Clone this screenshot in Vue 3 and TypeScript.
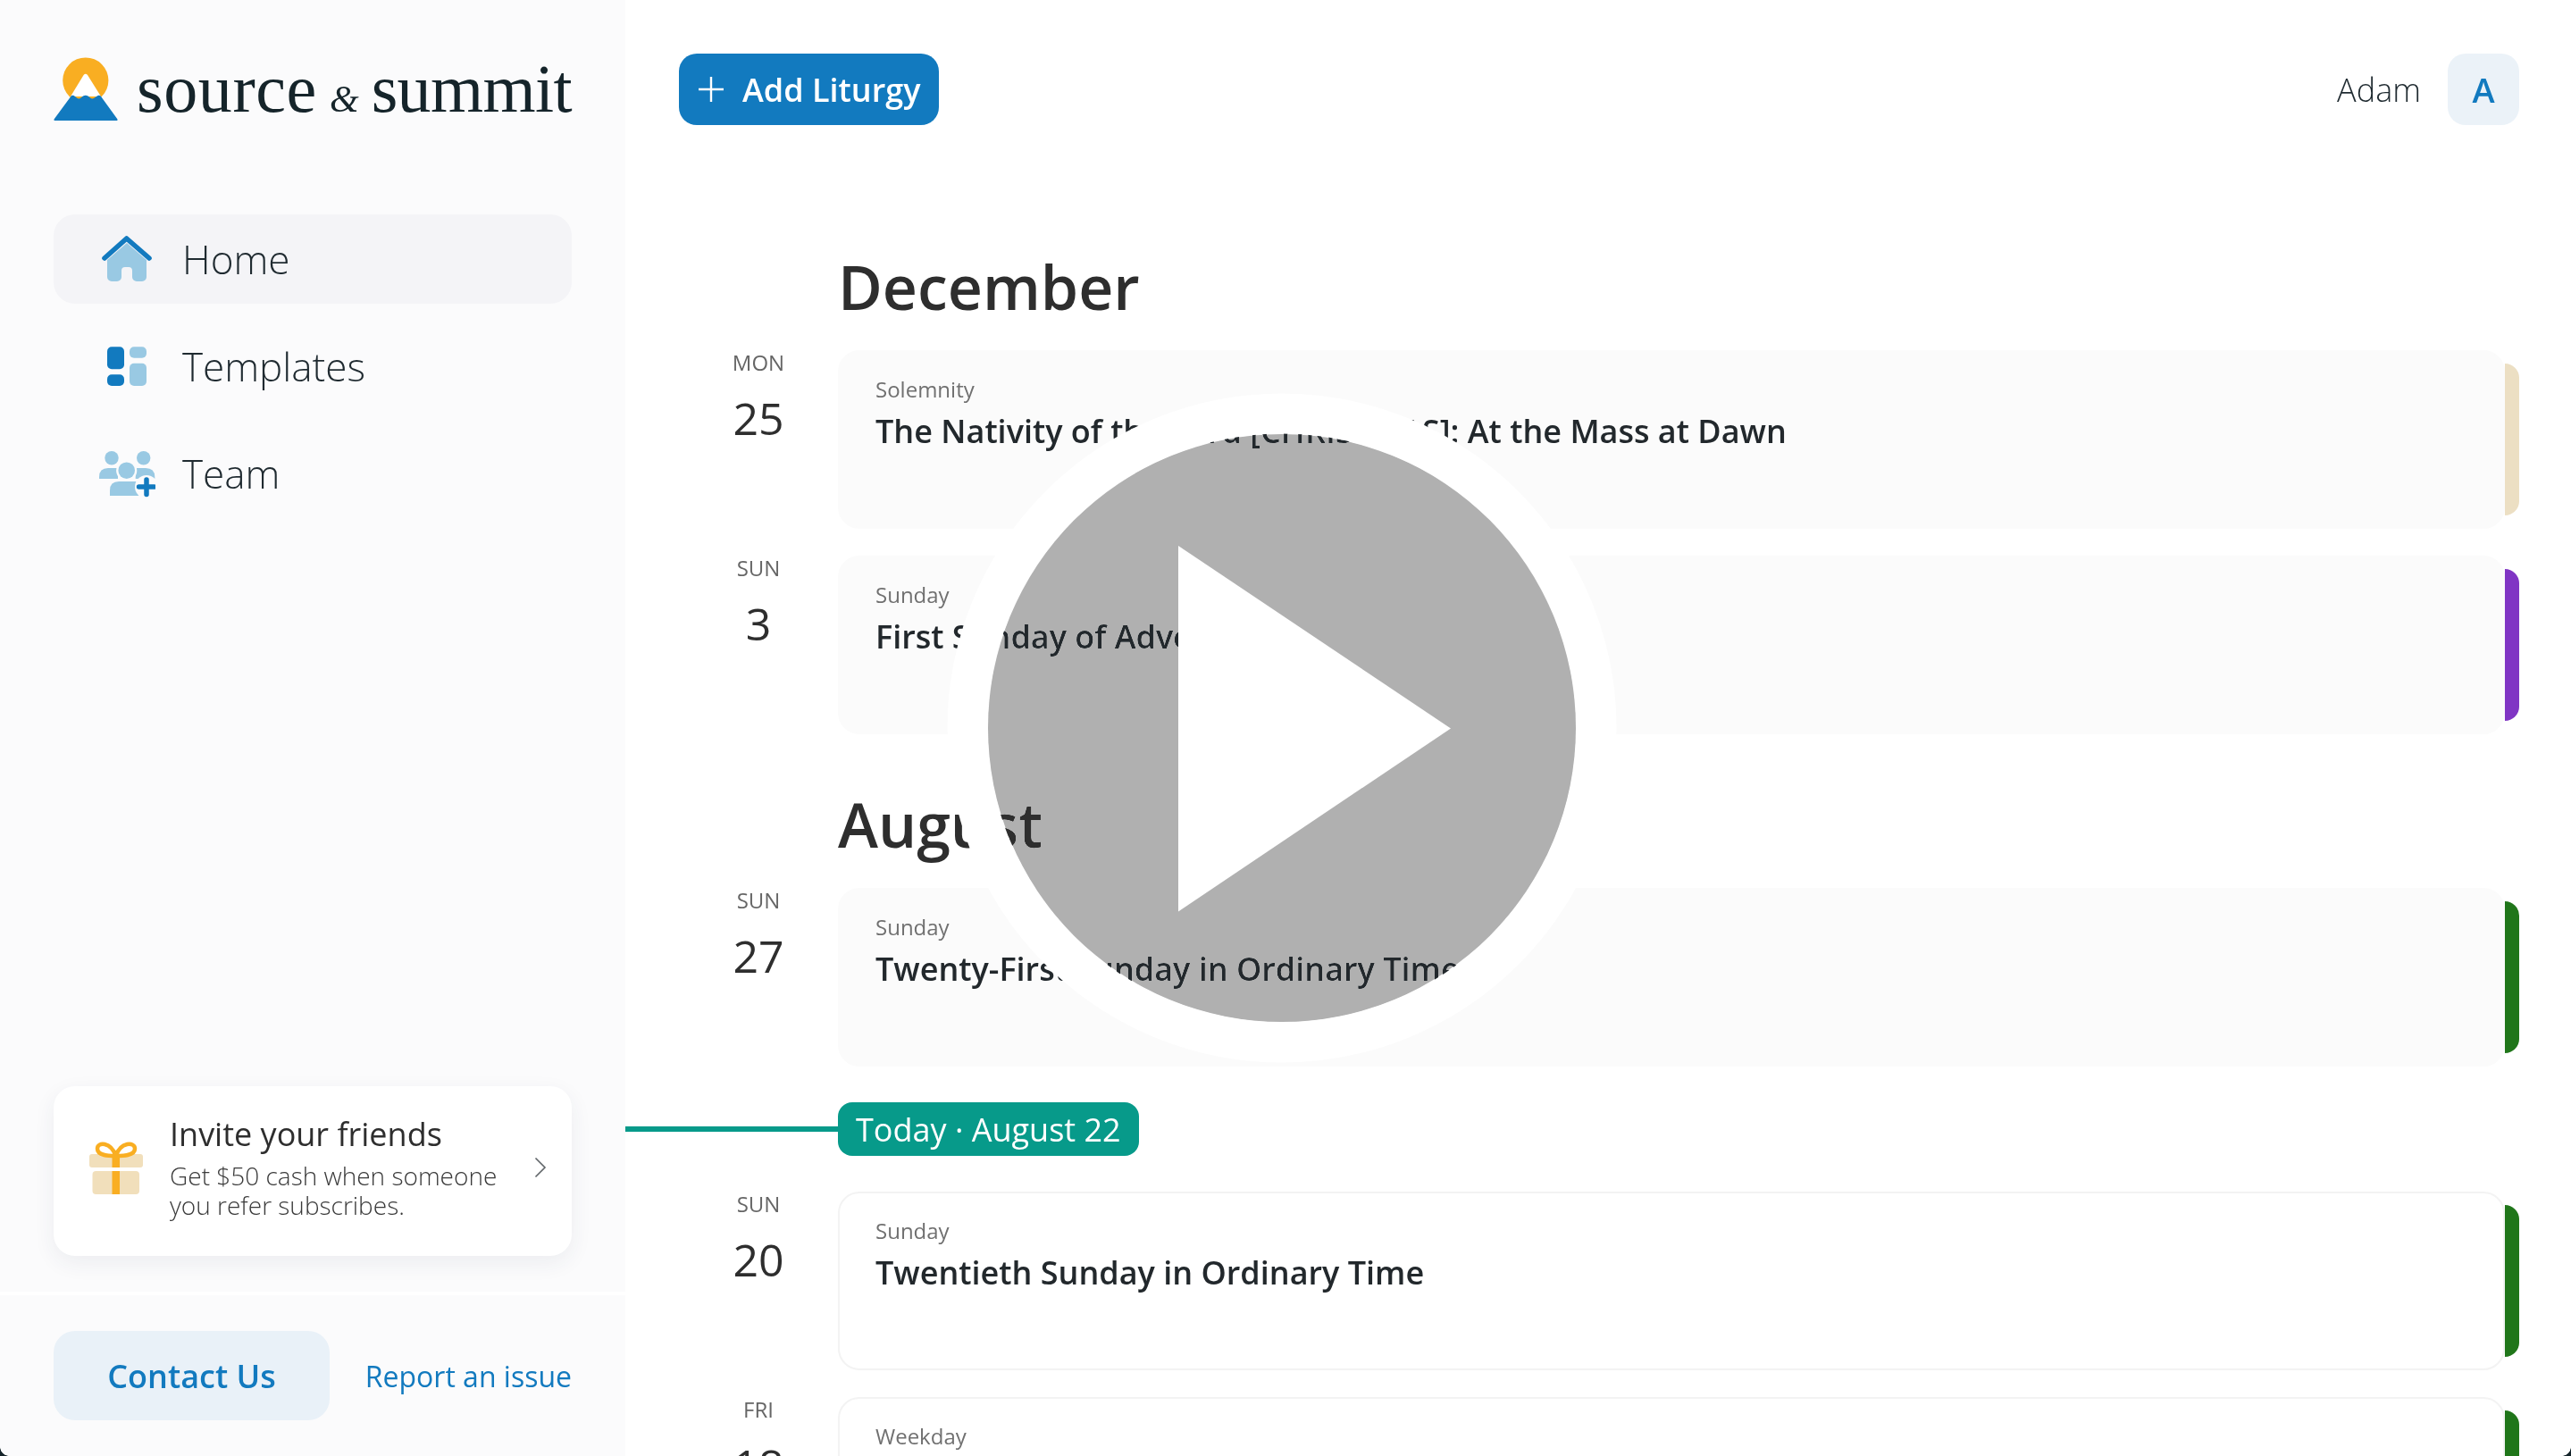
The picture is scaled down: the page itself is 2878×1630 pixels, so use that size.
<script setup lang="ts">
interface Liturgy {
  dow: string;
  day: string;
  kind: string;
  title: string;
  bar: string;
  outlined?: boolean;
}

const december: Liturgy[] = [
  { dow: 'MON', day: '25', kind: 'Solemnity', title: 'The Nativity of the Lord [CHRISTMAS]: At the Mass at Dawn', bar: '#ecdfc3' },
  { dow: 'SUN', day: '3', kind: 'Sunday', title: 'First Sunday of Advent', bar: '#8035c4' },
];
const augustBefore: Liturgy[] = [
  { dow: 'SUN', day: '27', kind: 'Sunday', title: 'Twenty-First Sunday in Ordinary Time', bar: '#20761a' },
];
const augustAfter: Liturgy[] = [
  { dow: 'SUN', day: '20', kind: 'Sunday', title: 'Twentieth Sunday in Ordinary Time', bar: '#20761a', outlined: true },
  { dow: 'FRI', day: '18', kind: 'Weekday', title: '', bar: '#20761a', outlined: true },
];
</script>

<template>
  <div class="app">
    <aside class="sidebar">
      <div class="logo">
        <svg class="logo-mark" width="72" height="72" viewBox="0 0 72 72">
          <circle cx="35.8" cy="26" r="25.6" fill="#f9ae22" />
          <path d="M33.6 20 Q35.8 17.4 38 20 L53 44 H19 Z" fill="#fff" />
          <path d="M20 43 Q22 42 24 44 L26.5 46 Q28.5 47 30.5 45.5 L33 43.5 Q35.8 41.8 38.5 43.5 L41 45.5 Q43 47 45 46 L48 44 Q50.5 42 52.5 43.2 L71.5 69.5 Q72 71 70.5 71 H1.5 Q0 71 .5 69.5 Z" fill="#127abf" />
        </svg>
        <div class="wordmark">
          <span class="word-a">source</span>
          <span class="amp">&amp;</span>
          <span class="word-b">summit</span>
        </div>
      </div>

      <nav class="nav">
        <div class="nav-item active">
          <svg width="64" height="64" viewBox="0 0 64 64">
            <path d="M10 33 L32 14 L54 33 V52 a5 5 0 0 1 -5 5 H43 a5 5 0 0 1 -5 -5 V45 a4 4 0 0 0 -4 -4 H30 a4 4 0 0 0 -4 4 V52 a5 5 0 0 1 -5 5 H15 a5 5 0 0 1 -5 -5 Z" fill="#99c9e3" />
            <path d="M7 31 L31.7 9 L57 31" fill="none" stroke="#127abf" stroke-width="5.6" stroke-linecap="round" stroke-linejoin="round" />
          </svg>
          <span>Home</span>
        </div>
        <div class="nav-item">
          <svg width="64" height="64" viewBox="0 0 64 64">
            <rect x="10" y="10.3" width="19" height="25" rx="5" fill="#127abf" />
            <rect x="10" y="41.3" width="19" height="12.7" rx="5" fill="#127abf" />
            <rect x="35" y="10.3" width="19" height="12.4" rx="5" fill="#99c9e3" />
            <rect x="35" y="28.7" width="19" height="25.3" rx="5" fill="#99c9e3" />
          </svg>
          <span>Templates</span>
        </div>
        <div class="nav-item">
          <svg width="64" height="64" viewBox="0 0 64 64">
            <circle cx="15" cy="14.7" r="7.7" fill="#99c9e3" />
            <circle cx="50.7" cy="14.7" r="7.7" fill="#99c9e3" />
            <path d="M1 38 V36 Q1 26 11 26 H22 V38 Z" fill="#99c9e3" />
            <path d="M41.7 26 H53 Q63.3 26 63.3 36 V38 H41.7 Z" fill="#99c9e3" />
            <circle cx="31.7" cy="28.7" r="11.6" fill="#fbfbfc" />
            <circle cx="31.7" cy="28.7" r="9.3" fill="#99c9e3" />
            <path d="M13 57 V51 Q13 41 23 41 H42 Q50 41 50 51 V57 Z" fill="#99c9e3" />
            <circle cx="54" cy="47" r="13" fill="#fbfbfc" />
            <path d="M54 39 V55.5 M45.5 47 H62.5" stroke="#127abf" stroke-width="5.5" stroke-linecap="round" />
          </svg>
          <span>Team</span>
        </div>
      </nav>

      <div class="invite">
        <svg class="gift" width="60" height="60" viewBox="0 0 60 60">
          <rect x="0" y="15" width="60" height="15" rx="3" fill="#f1dfbb" />
          <rect x="3.5" y="34" width="52.5" height="26" rx="4" fill="#f1dfbb" />
          <rect x="25.5" y="15" width="8.5" height="15" fill="#f9ae22" />
          <rect x="25.5" y="34" width="8.5" height="26" fill="#f9ae22" />
          <path d="M29.7 17 C22 17 9 17 9 9 C9 1 24 1 29.7 17 C35 1 51 1 51 9 C51 17 37 17 29.7 17 Z" fill="none" stroke="#f9ae22" stroke-width="4.5" />
        </svg>
        <div class="invite-text">
          <div class="invite-title">Invite your friends</div>
          <div class="invite-sub">Get $50 cash when someone<br />you refer subscribes.</div>
        </div>
        <svg class="chevron" width="14" height="24" viewBox="0 0 14 24">
          <path d="M1.5 1.5 L12 12 L1.5 22.5" fill="none" stroke="#5f6468" stroke-width="1.6" />
        </svg>
      </div>

      <div class="side-footer">
        <div class="contact">Contact Us</div>
        <div class="report">Report an issue</div>
      </div>
    </aside>

    <main class="main">
      <header class="topbar">
        <div class="add-btn">
          <svg width="30" height="30" viewBox="0 0 30 30">
            <path d="M15 1 V29 M1 15 H29" stroke="#fff" stroke-width="2.4" />
          </svg>
          <span>Add Liturgy</span>
        </div>
        <div class="user">
          <span class="user-name">Adam</span>
          <div class="avatar">A</div>
        </div>
      </header>

      <section class="timeline">
        <h2 class="month">December</h2>
        <div v-for="item in december" :key="item.title" class="row">
          <div class="date"><div class="dow">{{ item.dow }}</div><div class="day">{{ item.day }}</div></div>
          <div class="card" :class="{ outlined: item.outlined }">
            <div class="kind">{{ item.kind }}</div>
            <div class="title">{{ item.title }}</div>
          </div>
          <div class="bar" :style="{ background: item.bar }"></div>
        </div>

        <h2 class="month later">August</h2>
        <div v-for="item in augustBefore" :key="item.title" class="row">
          <div class="date"><div class="dow">{{ item.dow }}</div><div class="day">{{ item.day }}</div></div>
          <div class="card" :class="{ outlined: item.outlined }">
            <div class="kind">{{ item.kind }}</div>
            <div class="title">{{ item.title }}</div>
          </div>
          <div class="bar" :style="{ background: item.bar }"></div>
        </div>

        <div class="today">
          <div class="today-line"></div>
          <div class="today-pill">Today · August 22</div>
        </div>

        <div v-for="item in augustAfter" :key="item.day" class="row">
          <div class="date"><div class="dow">{{ item.dow }}</div><div class="day">{{ item.day }}</div></div>
          <div class="card" :class="{ outlined: item.outlined }">
            <div class="kind">{{ item.kind }}</div>
            <div class="title">{{ item.title }}</div>
          </div>
          <div class="bar" :style="{ background: item.bar }"></div>
        </div>
      </section>
    </main>

    <div class="play-disc"></div>
    <svg class="play" width="2878" height="1630" viewBox="0 0 2878 1630">
      <circle cx="1435" cy="815" r="352" fill="none" stroke="#fff" stroke-width="45" />
      <path d="M1319 611 L1624 815.5 L1319 1020.5 Z" fill="#fff" />
    </svg>
    <div class="corner corner-left"></div>
    <div class="corner corner-right"></div>
  </div>
</template>

<style>
html, body { margin: 0; background: #fff; }
</style>

<style scoped>
.app {
  position: relative;
  display: flex;
  width: 2878px;
  height: 1630px;
  overflow: hidden;
  background: #fff;
  font-family: "Open Sans", "Liberation Sans", sans-serif;
  color: #2e2e2e;
}

/* Sidebar */
.sidebar {
  flex: 0 0 700px;
  min-width: 0;
  box-sizing: border-box;
  display: flex;
  flex-direction: column;
  padding-top: 64px;
  background: #fbfbfc;
}
.logo {
  display: flex;
  height: 76px;
  margin: 0 60px 100px;
  gap: 21px;
}
.logo-mark { flex: none; }
.wordmark {
  display: flex;
  gap: 14px;
  align-items: baseline;
  font-family: "Liberation Serif", serif;
  font-size: 76px;
  line-height: 70px;
  color: #15242a;
  white-space: nowrap;
}
.word-a { letter-spacing: 0.6px; }
.word-b { letter-spacing: -0.6px; }
.amp { font-size: 42px; font-style: italic; }

.nav {
  display: flex;
  flex-direction: column;
  gap: 20px;
  margin: 0 60px;
  flex: 1;
}
.nav-item {
  display: flex;
  align-items: center;
  gap: 30px;
  height: 100px;
  padding-left: 50px;
  border-radius: 24px;
  font-size: 44px;
  font-weight: 300;
  color: #1f2a30;
}
.nav-item.active { background: #f4f4f7; }

.invite {
  position: relative;
  display: flex;
  align-items: center;
  height: 190px;
  box-sizing: border-box;
  margin: 0 60px 40px;
  padding: 0 28px 8px 40px;
  border-radius: 24px;
  background: #fff;
  box-shadow: 0 8px 24px rgba(40, 50, 90, 0.07);
}
.gift { flex: none; margin-right: 30px; }
.invite-text { flex: 1; }
.invite-title { font-size: 36px; line-height: 48px; color: #2e2e2e; margin: -2px 0 6px; }
.invite-sub { font-size: 28px; line-height: 33px; font-weight: 300; color: #3a3a3a; white-space: nowrap; }
.chevron { flex: none; }

.side-footer {
  display: flex;
  align-items: center;
  justify-content: space-between;
  padding: 40px 60px;
  border-top: 4px solid #fff;
}
.contact {
  display: flex;
  align-items: center;
  justify-content: center;
  width: 309px;
  height: 100px;
  border-radius: 24px;
  background: #e9f1f8;
  color: #127abf;
  font-size: 36px;
  font-weight: 600;
}
.report { font-size: 32px; color: #127abf; white-space: nowrap; }

/* Main */
.main {
  flex: 1;
  min-width: 0;
  box-sizing: border-box;
  padding: 60px 58px 0 60px;
}
.topbar {
  display: flex;
  align-items: center;
  justify-content: space-between;
  height: 80px;
  margin-bottom: 135px;
}
.add-btn {
  display: flex;
  align-items: center;
  gap: 20px;
  box-sizing: border-box;
  width: 291px;
  height: 80px;
  padding-left: 21px;
  border-radius: 20px;
  background: #127abf;
  color: #fff;
  font-size: 36px;
  font-weight: 600;
  white-space: nowrap;
}
.user { display: flex; align-items: center; gap: 30px; }
.user-name { font-size: 36px; font-weight: 300; color: #1f2a30; }
.avatar {
  display: flex;
  align-items: center;
  justify-content: center;
  width: 80px;
  height: 80px;
  border-radius: 20px;
  background: #ebf2f8;
  color: #127abf;
  font-size: 38px;
  font-weight: 600;
}

.timeline { display: flex; flex-direction: column; }
.month {
  margin: 0 0 25px 178px;
  font-size: 68px;
  line-height: 92px;
  font-weight: 600;
  color: #2e2e2e;
}
.month.later { margin-top: 25px; }
.row {
  display: flex;
  height: 200px;
  margin-bottom: 30px;
  flex: none;
}
.date {
  flex: 0 0 178px;
  text-align: center;
}
.dow { font-size: 24px; line-height: 28px; color: #666; margin-bottom: 18px; }
.day { font-size: 50px; line-height: 60px; color: #2e2e2e; }
.card {
  flex: 1;
  box-sizing: border-box;
  padding: 24px 40px 0;
  border: 2px solid #fbfbfb;
  border-radius: 24px;
  background: #fbfbfb;
}
.card.outlined { background: #fff; border-color: #f3f3f3; }
.kind { font-size: 24px; line-height: 36px; color: #707070; margin-bottom: 4px; }
.title { font-size: 36px; line-height: 50px; font-weight: 600; color: #22282c; white-space: nowrap; }
.bar {
  flex: 0 0 16px;
  align-self: center;
  height: 170px;
  border-radius: 0 16px 16px 0;
}

.today {
  display: flex;
  align-items: center;
  height: 60px;
  margin: 10px 0 40px -60px;
  flex: none;
}
.today-line { flex: 0 0 238px; height: 6px; background: #079a8a; }
.today-pill {
  display: flex;
  align-items: center;
  height: 60px;
  padding: 0 20px;
  border-radius: 16px;
  background: #079a8a;
  color: #fff;
  font-size: 36px;
  white-space: nowrap;
}

/* Overlay */
.play-disc {
  position: absolute;
  left: 1106px;
  top: 486px;
  width: 658px;
  height: 658px;
  border-radius: 50%;
  background: #b0b0b0;
  mix-blend-mode: darken;
}
.play { position: absolute; inset: 0; pointer-events: none; }
.corner { position: absolute; bottom: 0; width: 10px; height: 10px; }
.corner-left { left: 0; background: radial-gradient(circle at 100% 0, transparent 9.5px, #15242a 10px); }
.corner-right { right: 0; background: radial-gradient(circle at 0 0, transparent 9.5px, #15242a 10px); }
</style>
